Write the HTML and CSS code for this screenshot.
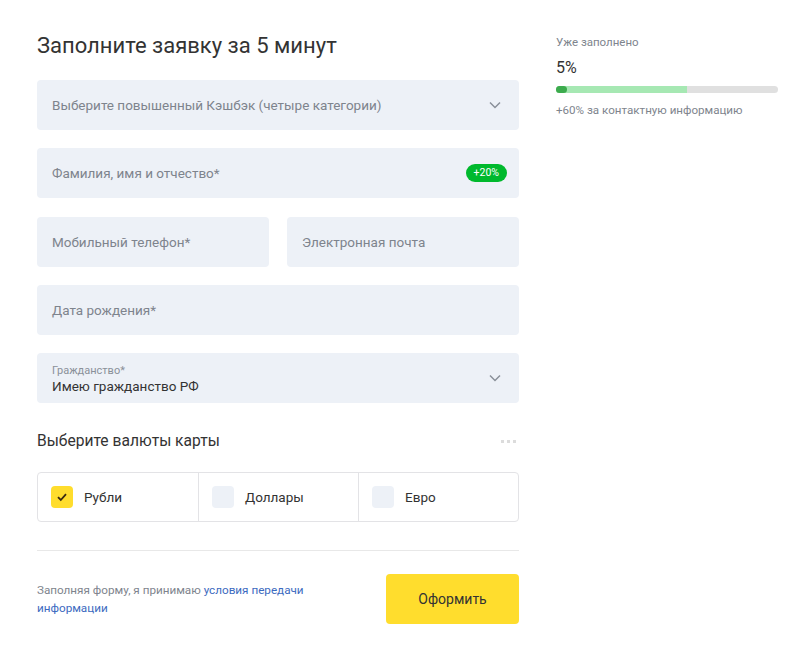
FILE: index.html
```html
<!DOCTYPE html>
<html lang="ru">
<head>
<meta charset="utf-8">
<title>Заполните заявку</title>
<link rel="stylesheet" href="styles.css">
</head>
<body>
<div class="page">
  <main class="form">
    <h1 class="title">Заполните заявку за 5 минут</h1>
    <div class="field select">
      <span class="ph">Выберите повышенный Кэшбэк (четыре категории)</span>
      <svg class="chev" width="12" height="8" viewBox="0 0 12 8"><path d="M1 1.5 6 6.5 11 1.5" fill="none" stroke="#8a9099" stroke-width="1.5"/></svg>
    </div>
    <div class="field">
      <span class="ph">Фамилия, имя и отчество*</span>
      <span class="badge">+20%</span>
    </div>
    <div class="row">
      <div class="field"><span class="ph">Мобильный телефон*</span></div>
      <div class="field"><span class="ph">Электронная почта</span></div>
    </div>
    <div class="field"><span class="ph">Дата рождения*</span></div>
    <div class="field select">
      <div class="filled">
        <span class="lbl">Гражданство*</span>
        <span class="val">Имею гражданство РФ</span>
      </div>
      <svg class="chev" width="12" height="8" viewBox="0 0 12 8"><path d="M1 1.5 6 6.5 11 1.5" fill="none" stroke="#8a9099" stroke-width="1.5"/></svg>
    </div>
    <div class="sec-head">
      <h2 class="sec-title">Выберите валюты карты</h2>
      <span class="dots"><i></i><i></i><i></i></span>
    </div>
    <div class="currencies">
      <label class="cur">
        <span class="box on"><svg width="12" height="10" viewBox="0 0 12 10"><path d="M2 5.2 4.8 8 10 2.2" fill="none" stroke="#3a2a10" stroke-width="1.8"/></svg></span>
        <span class="cur-name">Рубли</span>
      </label>
      <label class="cur">
        <span class="box"></span>
        <span class="cur-name">Доллары</span>
      </label>
      <label class="cur">
        <span class="box"></span>
        <span class="cur-name">Евро</span>
      </label>
    </div>
    <div class="divider"></div>
    <div class="footer">
      <div class="terms">
        <div class="terms-line">Заполняя форму, я принимаю <a href="#">условия передачи</a></div>
        <div class="terms-line"><a href="#">информации</a></div>
      </div>
      <button class="submit">Оформить</button>
    </div>
  </main>
  <aside class="progress">
    <div class="p-label">Уже заполнено</div>
    <div class="p-value">5%</div>
    <div class="bar"><div class="bar-next" style="width:59%"></div><div class="bar-done" style="width:5%"></div></div>
    <div class="p-hint">+60% за контактную информацию</div>
  </aside>
</div>
</body>
</html>
```

FILE: styles.css
```css
* { box-sizing: border-box; }
body {
  margin: 0;
  background: #fff;
  font-family: Roboto, "Liberation Sans", Arial, sans-serif;
  color: #333;
}
.page {
  display: flex;
  padding: 0 0 0 37px;
}
.form {
  width: 482px;
  display: flex;
  flex-direction: column;
}
.title {
  margin: 32px 0 20px;
  font-size: 22px;
  line-height: 28px;
  font-weight: 400;
  color: #333;
}
.field {
  height: 50px;
  background: #edf1f7;
  border-radius: 4px;
  display: flex;
  align-items: center;
  padding: 0 15px;
  margin-bottom: 18.3px;
  position: relative;
}
.ph {
  font-size: 13.5px;
  color: #7e848d;
  flex: 1;
}
.chev { margin-right: 3px; }
.badge {
  background: #00b92d;
  color: #fff;
  font-size: 10.5px;
  line-height: 18px;
  height: 18px;
  padding: 0 8px;
  border-radius: 9px;
  margin-right: -3px;
}
.row {
  display: grid;
  grid-template-columns: 1fr 1fr;
  gap: 18px;
}
.filled {
  flex: 1;
  display: flex;
  flex-direction: column;
  padding-top: 2px;
}
.lbl {
  font-size: 11px;
  line-height: 13px;
  color: #8a9099;
}
.val {
  font-size: 13.5px;
  line-height: 18px;
  color: #333;
}
.sec-head {
  display: flex;
  align-items: center;
  justify-content: space-between;
  height: 40px;
}
.sec-title {
  margin: 0;
  font-size: 15.6px;
  font-weight: 400;
  color: #333;
}
.dots {
  display: flex;
  gap: 3px;
  margin-right: 3px;
}
.dots i {
  width: 3px;
  height: 3px;
  background: #dcdcdc;
  display: block;
}
.currencies {
  margin-top: 11px;
  height: 50px;
  display: grid;
  grid-template-columns: 1fr 1fr 1fr;
  border: 1px solid #e3e3e6;
  border-radius: 4px;
}
.cur {
  display: flex;
  align-items: center;
  padding-left: 13px;
  gap: 11px;
  border-left: 1px solid #e3e3e6;
}
.cur:first-child { border-left: none; }
.box {
  width: 22px;
  height: 22px;
  border-radius: 4px;
  background: #edf1f7;
  display: flex;
  align-items: center;
  justify-content: center;
}
.box.on { background: #ffdd2d; }
.cur-name {
  font-size: 13.5px;
  color: #333;
}
.divider {
  height: 1px;
  background: #e8e8e8;
  margin-top: 28px;
}
.footer {
  display: flex;
  justify-content: space-between;
  align-items: center;
  margin-top: 23px;
}
.terms {
  width: 290px;
  font-size: 11.7px;
  line-height: 18px;
  color: #7e848d;
}
.terms a {
  color: #3c6ac0;
  text-decoration: none;
}
.submit {
  width: 133px;
  height: 50px;
  border: none;
  border-radius: 4px;
  background: #ffdd2d;
  font-family: inherit;
  font-size: 14px;
  color: #333;
}
.progress {
  margin-left: 37px;
  width: 222px;
  padding-top: 35px;
}
.p-label {
  font-size: 11.5px;
  line-height: 14px;
  color: #7e848d;
}
.p-value {
  margin-top: 9px;
  font-size: 16px;
  line-height: 20px;
  color: #333;
}
.bar {
  margin-top: 8px;
  height: 7px;
  border-radius: 4px;
  background: #e0e0e0;
  position: relative;
}
.bar-next, .bar-done {
  position: absolute;
  left: 0;
  top: 0;
  height: 100%;
  border-radius: 4px 0 0 4px;
}
.bar-next { background: #a6e8b3; }
.bar-done { background: #3cab4d; border-radius: 4px; }
.p-hint {
  margin-top: 10px;
  font-size: 11.6px;
  line-height: 14px;
  color: #7e848d;
}
```
